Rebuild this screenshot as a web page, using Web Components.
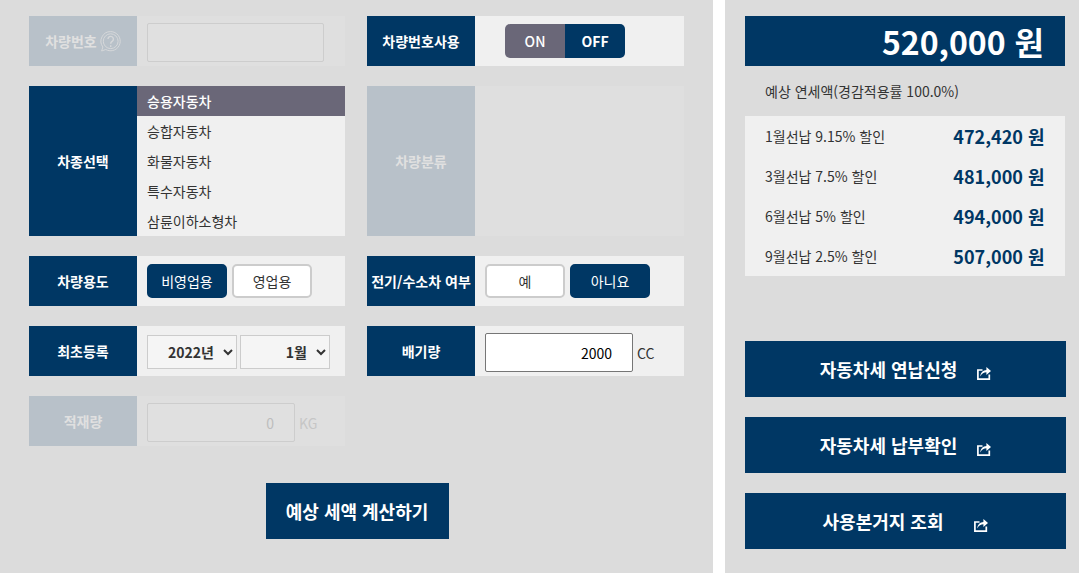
<!DOCTYPE html>
<html lang="ko">
<head>
<meta charset="utf-8">
<title>자동차세 계산</title>
<style>
  html, body { margin: 0; padding: 0; height: 100%; background: #fff; }
  body { font-family: "Noto Sans CJK KR", "Noto Sans", sans-serif; overflow: hidden; }
</style>
</head>
<body>
<tax-page>
  <tax-form>
    <form-row label="차량번호" disabled help>
      <text-field width="177" disabled></text-field>
    </form-row>
    <form-row label="차량번호사용">
      <on-off></on-off>
    </form-row>
    <form-row label="차종선택" flush>
      <type-list>
        <type-item selected>승용자동차</type-item>
        <type-item>승합자동차</type-item>
        <type-item>화물자동차</type-item>
        <type-item>특수자동차</type-item>
        <type-item>삼륜이하소형차</type-item>
      </type-list>
    </form-row>
    <form-row label="차량분류" disabled flush></form-row>
    <form-row label="차량용도">
      <pick-button active>비영업용</pick-button>
      <pick-button>영업용</pick-button>
    </form-row>
    <form-row label="전기/수소차 여부" tight>
      <pick-button>예</pick-button>
      <pick-button active>아니요</pick-button>
    </form-row>
    <form-row label="최초등록" narrow>
      <date-select options="2022년,2021년,2020년"></date-select>
      <date-select options="1월,2월,3월"></date-select>
    </form-row>
    <form-row label="배기량">
      <text-field width="148" value="2000" unit="CC"></text-field>
    </form-row>
    <form-row label="적재량" disabled>
      <text-field width="148" value="0" unit="KG" disabled></text-field>
    </form-row>
  </tax-form>
  <tax-side>
    <tax-total amount="520,000 원" note="예상 연세액(경감적용률 100.0%)"></tax-total>
    <discount-list>
      <discount-row label="1월선납 9.15% 할인" amount="472,420 원"></discount-row>
      <discount-row label="3월선납 7.5% 할인" amount="481,000 원"></discount-row>
      <discount-row label="6월선납 5% 할인" amount="494,000 원"></discount-row>
      <discount-row label="9월선납 2.5% 할인" amount="507,000 원"></discount-row>
    </discount-list>
    <link-list>
      <link-button>자동차세 연납신청</link-button>
      <link-button>자동차세 납부확인</link-button>
      <link-button wide>사용본거지 조회</link-button>
    </link-list>
  </tax-side>
</tax-page>

<script>
  const NAVY = '#003764';

  class TaxPage extends HTMLElement {
    constructor() {
      super();
      this.attachShadow({ mode: 'open' });
      this.shadowRoot.innerHTML = `
        <style>
          :host {
            display: grid;
            grid-template-columns: 713px 354px;
            column-gap: 12px;
            height: 573px;
            width: 1079px;
            background: #fff;
          }
        </style>
        <slot></slot>
      `;
    }
  }

  class TaxForm extends HTMLElement {
    constructor() {
      super();
      this.attachShadow({ mode: 'open' });
      this.shadowRoot.innerHTML = `
        <style>
          :host {
            display: block;
            background: #dcdcdc;
            padding: 16px 29px 0;
            box-sizing: border-box;
          }
          .grid {
            display: grid;
            grid-template-columns: 316px 317px;
            grid-template-rows: 50px 150px 50px 50px 50px;
            column-gap: 22px;
            row-gap: 20px;
          }
          .submit {
            display: flex;
            justify-content: center;
            margin: 37px 0 0 1px;
          }
          button {
            width: 183px;
            height: 56px;
            border: 0;
            background: ${NAVY};
            color: #fff;
            font: 700 18px "Noto Sans CJK KR", sans-serif;
          }
        </style>
        <div class="grid"><slot></slot></div>
        <div class="submit"><button type="button">예상 세액 계산하기</button></div>
      `;
    }
  }

  class FormRow extends HTMLElement {
    connectedCallback() {
      if (this.shadowRoot) return;
      this.attachShadow({ mode: 'open' });
      const help = this.hasAttribute('help') ? `
        <svg width="21" height="21" viewBox="0 0 21 21" fill="none" stroke="#d6d8da" stroke-width="1">
          <path d="M10.7.6a9.6 9.6 0 1 1-4.9 17.9L1.6 20l1.3-4A9.6 9.6 0 0 1 10.7.6z"/>
          <circle cx="10.7" cy="10.2" r="7.4"/>
          <path d="M8 8a2.7 2.7 0 1 1 4.1 2.4c-1 .7-1.4 1.1-1.4 2.4" stroke-width="1.4"/>
          <path d="M10.7 14.2v1.8" stroke-width="1.4"/>
        </svg>` : '';
      this.shadowRoot.innerHTML = `
        <style>
          :host {
            display: grid;
            grid-template-columns: 108px 1fr;
            background: #f0f0f0;
            color: #333;
          }
          :host([disabled]) { background: #dfdfdf; }
          .label {
            display: flex;
            align-items: center;
            justify-content: center;
            gap: 3px;
            background: ${NAVY};
            color: #fff;
            font-size: 14px;
            font-weight: 700;
            white-space: nowrap;
          }
          :host([disabled]) .label { background: #b8c1c9; color: #e0e0e0; }
          .body {
            display: flex;
            align-items: center;
            gap: 5px;
            padding-left: 10px;
          }
          :host([flush]) .body { display: block; padding: 0; }
          :host([narrow]) .body { gap: 3px; }
        </style>
        <div class="label"><span>${this.getAttribute('label')}</span>${help}</div>
        <div class="body"><slot></slot></div>
      `;
    }
  }

  class TextField extends HTMLElement {
    connectedCallback() {
      if (this.shadowRoot) return;
      this.attachShadow({ mode: 'open' });
      const off = this.hasAttribute('disabled');
      const unit = this.getAttribute('unit');
      this.shadowRoot.innerHTML = `
        <style>
          :host {
            display: flex;
            align-items: center;
            gap: 4px;
            margin-top: 3px;
            font-size: 14px;
            color: #333;
          }
          :host([disabled]) { color: #c6c6c6; }
          input {
            box-sizing: border-box;
            width: ${this.getAttribute('width')}px;
            height: 39px;
            padding: 0 20px 0 4px;
            text-align: right;
            font: 14px "Noto Sans CJK KR", sans-serif;
            color: #000;
            background: #fff;
            border: 1px solid #767676;
            border-radius: 2px;
            outline: 0;
          }
          input:disabled {
            background: #e0e0e0;
            border-color: #cdcdcd;
            color: #bdbdbd;
          }
        </style>
        <input type="text" value="${this.getAttribute('value') || ''}" ${off ? 'disabled' : ''}>
        ${unit ? `<span>${unit}</span>` : ''}
      `;
    }
  }

  class OnOff extends HTMLElement {
    constructor() {
      super();
      this.attachShadow({ mode: 'open' });
      this.shadowRoot.innerHTML = `
        <style>
          :host {
            display: grid;
            grid-template-columns: 60px 60px;
            height: 34px;
            margin-left: 20px;
            border-radius: 5px;
            overflow: hidden;
            color: #fff;
            font-size: 14px;
            font-weight: 700;
            line-height: 34px;
            text-align: center;
          }
          .on { background: #6a6778; font-weight: 500; }
          .off { background: ${NAVY}; }
        </style>
        <div class="on">ON</div>
        <div class="off">OFF</div>
      `;
    }
  }

  class TypeList extends HTMLElement {
    constructor() {
      super();
      this.attachShadow({ mode: 'open' });
      this.shadowRoot.innerHTML = `
        <style>
          :host { display: block; background: #f0f0f0; height: 150px; }
        </style>
        <slot></slot>
      `;
    }
  }

  class TypeItem extends HTMLElement {
    constructor() {
      super();
      this.attachShadow({ mode: 'open' });
      this.shadowRoot.innerHTML = `
        <style>
          :host {
            display: block;
            height: 30px;
            padding-left: 10px;
            font-size: 14px;
            line-height: 30px;
            color: #333;
          }
          :host([selected]) {
            background: #6a6778;
            color: #fff;
            font-weight: 500;
          }
        </style>
        <slot></slot>
      `;
    }
  }

  class PickButton extends HTMLElement {
    constructor() {
      super();
      this.attachShadow({ mode: 'open' });
      this.shadowRoot.innerHTML = `
        <style>
          :host {
            display: block;
            box-sizing: border-box;
            width: 80px;
            height: 34px;
            border: 2px solid #ccc;
            border-radius: 5px;
            background: #fff;
            color: #333;
            font-size: 14px;
            line-height: 30px;
            text-align: center;
          }
          :host([active]) {
            border-color: ${NAVY};
            background: ${NAVY};
            color: #fff;
          }
        </style>
        <slot></slot>
      `;
    }
  }

  class DateSelect extends HTMLElement {
    connectedCallback() {
      if (this.shadowRoot) return;
      this.attachShadow({ mode: 'open' });
      const options = this.getAttribute('options').split(',')
        .map((o) => `<option>${o}</option>`).join('');
      this.shadowRoot.innerHTML = `
        <style>
          :host { display: block; margin-top: 2px; }
          select {
            box-sizing: border-box;
            display: block;
            width: 90px;
            height: 34px;
            padding: 0 6px 0 0;
            border: 1px solid #ccc;
            border-radius: 0;
            background: #f5f5f5;
            color: #333;
            font: 700 14px "Noto Sans CJK KR", sans-serif;
            text-align: right;
            outline: 0;
          }
        </style>
        <select>${options}</select>
      `;
    }
  }

  class TaxSide extends HTMLElement {
    constructor() {
      super();
      this.attachShadow({ mode: 'open' });
      this.shadowRoot.innerHTML = `
        <style>
          :host {
            display: block;
            background: #dcdcdc;
            padding: 16px 0 0 20px;
            box-sizing: border-box;
          }
        </style>
        <slot></slot>
      `;
    }
  }

  class TaxTotal extends HTMLElement {
    connectedCallback() {
      if (this.shadowRoot) return;
      this.attachShadow({ mode: 'open' });
      this.shadowRoot.innerHTML = `
        <style>
          :host { display: block; width: 320px; }
          .amount {
            height: 50px;
            padding-right: 21px;
            background: ${NAVY};
            color: #fff;
            font-size: 32px;
            font-weight: 700;
            line-height: 50px;
            text-align: right;
          }
          .note {
            height: 50px;
            padding-left: 20px;
            color: #333;
            font-size: 14px;
            line-height: 50px;
          }
        </style>
        <div class="amount">${this.getAttribute('amount')}</div>
        <div class="note">${this.getAttribute('note')}</div>
      `;
    }
  }

  class DiscountList extends HTMLElement {
    constructor() {
      super();
      this.attachShadow({ mode: 'open' });
      this.shadowRoot.innerHTML = `
        <style>
          :host { display: block; width: 320px; background: #f0f0f0; }
        </style>
        <slot></slot>
      `;
    }
  }

  class DiscountRow extends HTMLElement {
    connectedCallback() {
      if (this.shadowRoot) return;
      this.attachShadow({ mode: 'open' });
      this.shadowRoot.innerHTML = `
        <style>
          :host {
            display: flex;
            justify-content: space-between;
            align-items: center;
            height: 40px;
            padding: 0 20.5px 0 20px;
          }
          .label { color: #333; font-size: 14px; margin-bottom: 1px; }
          .amount { color: ${NAVY}; font-size: 18px; font-weight: 700; }
        </style>
        <span class="label">${this.getAttribute('label')}</span>
        <span class="amount">${this.getAttribute('amount')}</span>
      `;
    }
  }

  class LinkList extends HTMLElement {
    constructor() {
      super();
      this.attachShadow({ mode: 'open' });
      this.shadowRoot.innerHTML = `
        <style>
          :host {
            display: flex;
            flex-direction: column;
            gap: 20px;
            width: 321px;
            margin-top: 65px;
          }
        </style>
        <slot></slot>
      `;
    }
  }

  class LinkButton extends HTMLElement {
    constructor() {
      super();
      this.attachShadow({ mode: 'open' });
      this.shadowRoot.innerHTML = `
        <style>
          :host {
            display: flex;
            align-items: center;
            justify-content: center;
            gap: 20px;
            height: 56px;
            background: ${NAVY};
            color: #fff;
            font-size: 18px;
            font-weight: 700;
          }
          :host([wide]) { gap: 31px; }
          svg { margin-top: 8px; }
        </style>
        <slot></slot>
        <svg width="14" height="13" viewBox="0 0 14 13" fill="none">
          <path d="M5.5 3H.9v9.1h11.4V7.5" stroke="#fff" stroke-width="1.7"/>
          <path d="M3.2 9.4C3.6 5.4 6.2 3.2 9.4 3V0L14 4 9.4 8V5.3C7 5.3 4.8 6.8 3.2 9.4z" fill="#fff"/>
        </svg>
      `;
    }
  }

  customElements.define('tax-page', TaxPage);
  customElements.define('tax-form', TaxForm);
  customElements.define('form-row', FormRow);
  customElements.define('text-field', TextField);
  customElements.define('on-off', OnOff);
  customElements.define('type-list', TypeList);
  customElements.define('type-item', TypeItem);
  customElements.define('pick-button', PickButton);
  customElements.define('date-select', DateSelect);
  customElements.define('tax-side', TaxSide);
  customElements.define('tax-total', TaxTotal);
  customElements.define('discount-list', DiscountList);
  customElements.define('discount-row', DiscountRow);
  customElements.define('link-list', LinkList);
  customElements.define('link-button', LinkButton);
</script>
</body>
</html>
